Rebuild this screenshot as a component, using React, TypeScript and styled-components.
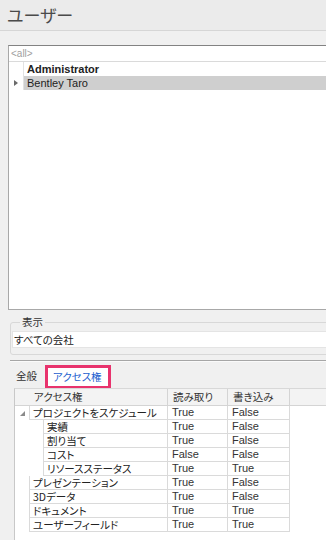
import React from "react";
import styled, { createGlobalStyle } from "styled-components";

const GlobalStyle = createGlobalStyle`
  html, body {
    margin: 0;
    padding: 0;
  }
  body {
    background: #f0f0f0;
    color: #222;
    font-family: "Liberation Sans", "Noto Sans CJK JP", sans-serif;
    font-size: 11px;
    font-feature-settings: "palt";
  }
`;

const users = [
  { name: "Administrator", bold: true, selected: false },
  { name: "Bentley Taro", bold: false, selected: true },
];

const rights = [
  { name: "プロジェクトをスケジュール", level: 0, expandable: true, read: "True", write: "False" },
  { name: "実績", level: 1, read: "True", write: "False" },
  { name: "割り当て", level: 1, read: "True", write: "False" },
  { name: "コスト", level: 1, read: "False", write: "False" },
  { name: "リソースステータス", level: 1, read: "True", write: "True" },
  { name: "プレゼンテーション", level: 0, read: "True", write: "False" },
  { name: "3Dデータ", level: 0, read: "True", write: "False" },
  { name: "ドキュメント", level: 0, read: "True", write: "True" },
  { name: "ユーザーフィールド", level: 0, read: "True", write: "True" },
];

export default function App() {
  return (
    <>
      <GlobalStyle />
      <Frame>
        <Header>ユーザー</Header>
        <Body>
          <ListBox>
            <FilterRow>&lt;all&gt;</FilterRow>
            {users.map((u) => (
              <UserRow key={u.name}>
                <RowHeader>{u.selected && <RowPointer />}</RowHeader>
                <UserCell $bold={u.bold} $selected={u.selected}>
                  {u.name}
                </UserCell>
              </UserRow>
            ))}
          </ListBox>
          <Group>
            <Legend>表示</Legend>
            <TextBox>すべての会社</TextBox>
          </Group>
          <Separator />
          <TabPanel>
            <TabStrip>
              <Tab>全般</Tab>
              <ActiveTab>アクセス権</ActiveTab>
            </TabStrip>
            <Grid>
              <HeaderRow>
                <HeadCell $w={153} $pad={19}>アクセス権</HeadCell>
                <HeadCell $w={60}>読み取り</HeadCell>
                <HeadCell $w={62}>書き込み</HeadCell>
                <HeadFill />
              </HeaderRow>
              {rights.map((r) => (
                <DataRow key={r.name}>
                  <Indent $w={14 * (r.level + 1)}>{r.expandable && <Expander />}</Indent>
                  <NameCell $w={153 - 14 * (r.level + 1)}>{r.name}</NameCell>
                  <ValueCell $w={60}>{r.read}</ValueCell>
                  <ValueCell $w={62}>{r.write}</ValueCell>
                </DataRow>
              ))}
            </Grid>
          </TabPanel>
        </Body>
      </Frame>
    </>
  );
}

const Frame = styled.div`
  width: 326px;
  height: 540px;
  overflow: hidden;
  display: flex;
  flex-direction: column;
`;

const Header = styled.div`
  height: 30px;
  flex-shrink: 0;
  background: #ebebeb;
  border-bottom: 1px solid #d6d6d6;
  padding-left: 7px;
  font-size: 17px;
  line-height: 30px;
  color: #4a4a4a;
  font-family: "Noto Sans CJK JP", sans-serif;
`;

const Body = styled.div`
  flex: 1;
  display: flex;
  flex-direction: column;
  padding: 14px 0 0 8px;
  min-height: 0;
`;

const ListBox = styled.div`
  width: 330px;
  height: 263px;
  flex-shrink: 0;
  background: #fff;
  border: 1px solid #a8a8a8;
  border-top-color: #828282;
`;

const FilterRow = styled.div`
  height: 15px;
  line-height: 15px;
  padding-left: 2px;
  color: #a0a0a0;
  font-size: 10px;
  border-bottom: 1px solid #dadada;
`;

const UserRow = styled.div`
  display: grid;
  grid-template-columns: 15px 1fr;
  height: 14px;
  line-height: 14px;
`;

const RowHeader = styled.div`
  border-right: 1px solid #e2e2e2;
  display: flex;
  align-items: center;
  justify-content: center;
`;

const RowPointer = styled.span`
  width: 0;
  height: 0;
  border-top: 3px solid transparent;
  border-bottom: 3px solid transparent;
  border-left: 4px solid #6a6a6a;
`;

const UserCell = styled.div<{ $bold: boolean; $selected: boolean }>`
  padding-left: 3px;
  font-weight: ${(p) => (p.$bold ? 700 : 400)};
  background: ${(p) => (p.$selected ? "#cfcfcf" : "#fff")};
  color: #222;
`;

const Group = styled.fieldset`
  margin: 5px 0 0 2px;
  padding: 2px 1px 6px 1px;
  width: 330px;
  flex-shrink: 0;
  border: 1px solid #d8d8d8;
  border-radius: 3px;
  box-sizing: border-box;
`;

const Legend = styled.legend`
  margin-left: 8px;
  padding: 0 2px;
  line-height: 14px;
  font-size: 10.5px;
  color: #333;
  font-family: "Noto Sans CJK JP", sans-serif;
`;

const TextBox = styled.div`
  height: 15px;
  line-height: 15px;
  background: #fff;
  border: 1px solid #e4e4e4;
  padding-left: 1px;
  font-size: 10.5px;
  color: #222;
  font-family: "Noto Sans CJK JP", sans-serif;
`;

const Separator = styled.div`
  margin: 5px 0 0 2px;
  height: 0;
  border-top: 1px solid #a6a6a6;
  border-bottom: 1px solid #fafafa;
  flex-shrink: 0;
`;

const TabPanel = styled.div`
  flex: 1;
  display: flex;
  flex-direction: column;
  padding-left: 2px;
  min-height: 0;
`;

const TabStrip = styled.div`
  display: flex;
  align-items: flex-end;
  height: 26px;
  flex-shrink: 0;
  font-size: 10.5px;
  font-family: "Noto Sans CJK JP", sans-serif;
`;

const Tab = styled.div`
  padding: 0 6px;
  line-height: 16px;
  margin-bottom: 4px;
  color: #333;
`;

const ActiveTab = styled.div`
  margin-left: 2px;
  height: 18px;
  line-height: 18px;
  padding: 0 6px 0 5px;
  background: #fff;
  color: #1d5fcf;
  border: 3px solid #e8336d;
  margin-bottom: -1px;
`;

const Grid = styled.div`
  flex: 1;
  margin-left: 4px;
  background: #fff;
  border-left: 1px solid #c8c8c8;
  border-top: 1px solid #d8d8d8;
  font-size: 11px;
`;

const HeaderRow = styled.div`
  display: flex;
  height: 16px;
  background: #f3f3f3;
  border-bottom: 1px solid #d4d4d4;
  font-size: 10.5px;
  font-family: "Noto Sans CJK JP", sans-serif;
`;

const HeadCell = styled.div<{ $w: number; $pad?: number }>`
  width: ${(p) => p.$w}px;
  box-sizing: border-box;
  padding-left: ${(p) => p.$pad ?? 5}px;
  border-right: 1px solid #d4d4d4;
  line-height: 16px;
  color: #333;
`;

const HeadFill = styled.div`
  flex: 1;
`;

const DataRow = styled.div`
  display: flex;
  height: 14px;
  line-height: 13px;
`;

const Indent = styled.div<{ $w: number }>`
  width: ${(p) => p.$w}px;
  box-sizing: border-box;
  display: flex;
  align-items: center;
  justify-content: flex-end;
  padding-right: 4px;
`;

const Expander = styled.span`
  width: 0;
  height: 0;
  border-left: 5px solid transparent;
  border-bottom: 5px solid #8a8a8a;
`;

const NameCell = styled.div<{ $w: number }>`
  width: ${(p) => p.$w}px;
  box-sizing: border-box;
  padding-left: 3px;
  border-left: 1px solid #dadada;
  border-right: 1px solid #dadada;
  border-bottom: 1px solid #dadada;
  white-space: nowrap;
  font-size: 10.5px;
  font-family: "Noto Sans CJK JP", sans-serif;
  color: #222;
`;

const ValueCell = styled.div<{ $w: number }>`
  width: ${(p) => p.$w}px;
  box-sizing: border-box;
  padding-left: 4px;
  border-right: 1px solid #dadada;
  border-bottom: 1px solid #dadada;
  color: #333;
`;
